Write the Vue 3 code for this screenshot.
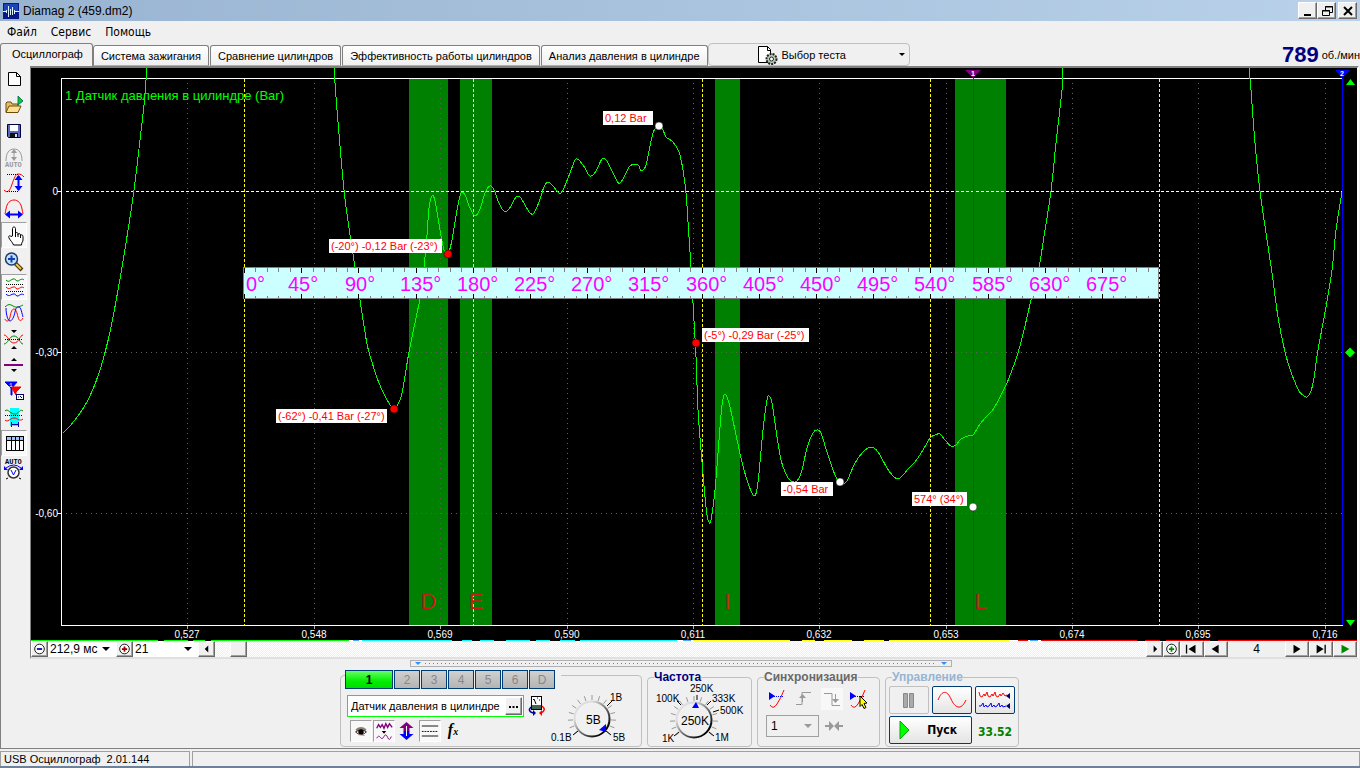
<script setup>
import { ref } from 'vue'

const tabs = [
  'Осциллограф',
  'Система зажигания',
  'Сравнение цилиндров',
  'Эффективность работы цилиндров',
  'Анализ давления в цилиндре',
]
const activeTab = ref(0)
const channels = ['1', '2', '3', '4', '5', '6', 'D']
const sensor = ref('Датчик давления в цилиндре')

const traces = [
  [[63,433],[70,426],[80,413],[90,396],[100,370],[110,332],[118,290],[126,243],[134,190],[140,140],[144,105],[146,80],[147,68]],
  [[334,68],[337,110],[344,190],[349,228],[355,267],[360,300],[367,344],[372,362],[377,378],[386,398],[394,409],[400,400],[403,388],[409,352],[416,318],[420,298],[424,267],[427,235],[429,208],[432,196],[435,201],[440,230],[444,250],[448,254],[452,240],[457,210],[460,196],[462,192],[465,195],[470,208],[475,216],[480,209],[485,193],[490,186],[494,190],[499,203],[505,212],[511,206],[516,197],[520,197],[525,205],[530,213],[534,213],[539,202],[544,187],[548,182],[553,186],[559,193],[563,190],[570,173],[576,159],[583,165],[590,176],[596,171],[602,159],[607,161],[614,175],[620,183],[630,166],[638,165],[641,171],[646,165],[653,133],[659,126],[663,130],[666,137],[673,142],[679,152],[683,170],[686,193],[688,222],[691,267],[693,303],[696,357],[698,410],[701,450],[704,486],[707,515],[709,522],[711,520],[715,490],[719,440],[722,405],[725,394],[729,403],[735,430],[741,458],[747,480],[754,496],[758,482],[763,430],[767,400],[769,396],[772,403],[776,430],[781,460],[786,474],[791,481],[797,481],[802,470],[807,448],[813,433],[817,430],[821,433],[827,452],[835,475],[840,482],[845,483],[848,479],[855,463],[863,452],[871,447],[878,452],[887,468],[893,476],[898,479],[903,475],[909,468],[915,462],[923,450],[930,438],[935,435],[940,434],[945,440],[951,446],[956,445],[961,439],[968,436],[973,435],[980,424],[987,416],[994,408],[1006,385],[1012,370],[1018,353],[1024,330],[1031,300],[1039,267],[1045,230],[1051,191],[1056,143],[1062,90],[1063,68]],
  [[1249,68],[1251,90],[1255,143],[1260,191],[1266,233],[1272,273],[1278,317],[1285,352],[1291,372],[1299,391],[1303,395],[1307,397],[1311,391],[1314,378],[1318,350],[1326,307],[1332,270],[1336,230],[1342,192]],
]

function smooth(p) {
  let d = `M${p[0][0]} ${p[0][1]}`
  for (let i = 0; i < p.length - 1; i++) {
    const a = p[i - 1] || p[i]
    const b = p[i]
    const c = p[i + 1]
    const e = p[i + 2] || c
    d += `C${b[0] + (c[0] - a[0]) / 6} ${b[1] + (c[1] - a[1]) / 6} ${c[0] - (e[0] - b[0]) / 6} ${c[1] - (e[1] - b[1]) / 6} ${c[0]} ${c[1]}`
  }
  return d
}
const tracePaths = traces.map(smooth)

const timeX = [187, 314, 440, 567, 693, 819, 946, 1072, 1198, 1325]
const timeMarks = timeX.map((x, i) => ({ label: `0,${527 + i * 21}`, x }))
const levelMarks = [
  { label: '0', y: 191 },
  { label: '-0,30', y: 352 },
  { label: '-0,60', y: 513 },
]
const phases = [
  { name: 'D', x: 409, w: 39 },
  { name: 'E', x: 460, w: 32 },
  { name: 'I', x: 715, w: 25 },
  { name: 'L', x: 955, w: 51 },
]
const strokes = [244, 473, 702, 930, 1159]
const ruler = []
for (let i = 0; i < 80; i++) ruler.push({ x: Math.round(244 + i * 11.44), major: i % 5 === 0 })
const degrees = []
for (let k = 0; k < 16; k++) {
  degrees.push({ label: `${k * 45}°`, x: Math.round(244 + k * 57.2) + (k === 0 ? 2 : k < 3 ? -13 : -16) })
}
const pins = [
  { text: '0,12 Bar', bx: 603, by: 111, bw: 50, x: 659, y: 126, c: '#fff' },
  { text: '(-20°) -0,12 Bar (-23°)', bx: 329, by: 239, bw: 113, x: 448, y: 254, c: '#f00' },
  { text: '(-5°) -0,29 Bar (-25°)', bx: 702, by: 328, bw: 107, x: 696, y: 343, c: '#f00' },
  { text: '(-62°) -0,41 Bar (-27°)', bx: 276, by: 409, bw: 111, x: 394, y: 409, c: '#f00' },
  { text: '-0,54 Bar', bx: 781, by: 482, bw: 52, x: 840, y: 482, c: '#fff' },
  { text: '574° (34°)', bx: 912, by: 492, bw: 55, x: 973, y: 507, c: '#fff' },
]
const bits = [
  [31, 318, '#0f0'], [353, 6, '#4af'], [362, 315, '#0ff'], [683, 8, '#4af'], [693, 316, '#ff0'], [1018, 10, '#f00'], [1030, 8, '#4af'], [1041, 316, '#f00'],
  [158, 6, '#000'], [188, 5, '#000'], [205, 6, '#000'], [452, 10, '#000'], [472, 8, '#000'], [494, 12, '#000'], [530, 6, '#000'], [550, 10, '#000'], [575, 5, '#000'],
  [790, 12, '#000'], [815, 9, '#000'], [852, 12, '#000'], [884, 5, '#000'], [1137, 8, '#000'], [1160, 6, '#000'], [1210, 8, '#000'],
]

function ticks(cx, cy, r1, r2, from, to, n) {
  let d = ''
  for (let i = 0; i < n; i++) {
    const a = ((from + ((to - from) * i) / (n - 1)) * Math.PI) / 180
    d += `M${cx + r1 * Math.cos(a)} ${cy + r1 * Math.sin(a)}L${cx + r2 * Math.cos(a)} ${cy + r2 * Math.sin(a)}`
  }
  return d
}
const gainTicks = ticks(42, 40, 19, 24, 140, 400, 15)
const rateTicks = ticks(46, 40, 19, 24, 140, 400, 15)
</script>

<template>
  <div class="app">
    <header class="title">
      <svg class="logo" viewBox="0 0 16 16" aria-hidden="true">
        <rect width="16" height="16" fill="#0a1a84" />
        <rect x="1" y="1" width="14" height="7" fill="#1c44b8" />
        <path d="M0 8.500h3M3.500 7v3M5.500 3v11M7.500 6v6M9.500 4v8M11.500 7v4M12 8.500h4" stroke="#dff2ff" fill="none" />
      </svg>
      <h1>Diamag 2 (459.dm2)</h1>
      <div class="win">
        <button aria-label="Свернуть"><svg viewBox="0 0 16 14"><path d="M4 11h7" stroke="#000" stroke-width="2" /></svg></button>
        <button aria-label="Восстановить"><svg viewBox="0 0 16 14"><path d="M6.500 6V2.500h7v6H11M6 3h8M3.500 6.500h7v5h-7zM3 7h8" stroke="#000" fill="none" /></svg></button>
        <button class="close" aria-label="Закрыть"><svg viewBox="0 0 16 14"><path d="M4 3l8 8M12 3l-8 8" stroke="#000" stroke-width="2" /></svg></button>
      </div>
    </header>

    <nav class="menu">
      <button>Файл</button>
      <button>Сервис</button>
      <button>Помощь</button>
    </nav>

    <div class="tabs">
      <div class="tablist" role="tablist">
        <button v-for="(t, i) in tabs" :key="t" role="tab" :aria-selected="i === activeTab" :class="{ on: i === activeTab }" @click="activeTab = i">{{ t }}</button>
      </div>
      <button class="test">
        <svg viewBox="0 0 20 20" aria-hidden="true">
          <path d="M.5 1.500h9l3 3v13H.5z" fill="#fff" stroke="#000" />
          <path d="M9.500 1.500v4h3" fill="none" stroke="#000" />
          <circle cx="13.500" cy="14" r="5" fill="#b8ccb8" stroke="#222" stroke-width="2" stroke-dasharray="2 1" />
          <circle cx="13.500" cy="14" r="2" fill="#fff" stroke="#222" />
        </svg>
        <span>Выбор теста</span>
        <i class="tri"></i>
      </button>
      <p class="rpm"><b>789</b> об./мин</p>
    </div>

    <main class="work">
      <div class="upper">
        <div class="tools">
          <button aria-label="Новый"><svg viewBox="0 0 26 26"><path d="M7.500 6.500h8l4 4v9h-12z" fill="#fff" stroke="#000" /><path d="M15.500 6.500v4h4" fill="none" stroke="#000" /></svg></button>
          <button aria-label="Открыть"><svg viewBox="0 0 26 26"><path d="M5 20V11l1-1h4l1 2h6v2" fill="#e8c060" stroke="#6b4a10" /><path d="M5 20.500l3-6.500h12l-3 6.500z" fill="#ffe090" stroke="#6b4a10" /><path d="M17 4v9l5-4z" fill="#0c3" stroke="#064" stroke-width=".8" /></svg></button>
          <button aria-label="Сохранить"><svg viewBox="0 0 26 26"><path d="M6.500 6.500h13v13h-12l-1-1z" fill="#5a66b8" stroke="#000040" /><rect x="9" y="7" width="8" height="6" fill="#fff" /><rect x="9" y="15" width="8" height="4" fill="#111" /><rect x="14" y="16" width="2" height="3" fill="#dde" /></svg></button>
          <button disabled aria-label="Автомасштаб"><svg viewBox="0 0 26 26"><path d="M5 17C5 9 8 5 13 5s8 4 8 12M13 6v9" fill="none" stroke="#999" /><path d="M10 9l3-4 3 4zM10 13l3 4 3-4z" fill="#999" /><text x="4" y="23" font-size="7" font-weight="bold" fill="#999">AUTO</text></svg></button>
          <button aria-label="Амплитуда"><svg viewBox="0 0 26 26"><path d="M3 20c3 3 5 2 7-3s4-13 7-13 4 1 6 3" fill="none" stroke="#f00" /><path d="M6 4.500h11M6 21.500h11" stroke="#000" stroke-dasharray="1 1" /><path d="M17.500 6v14" stroke="#00f" stroke-width="2" /><path d="M13.500 10l4-5 4 5zM13.500 16l4 5 4-5z" fill="#00f" /></svg></button>
          <button aria-label="Период"><svg viewBox="0 0 26 26"><path d="M4 18c0-2 1-3 1-5 1-6 4-9 8-9s7 3 8 9c0 2 1 3 1 5" fill="none" stroke="#f00" /><path d="M6 18.500h14" stroke="#00f" stroke-width="2" /><path d="M9 14.500l-5 4 5 4zM17 14.500l5 4-5 4z" fill="#00f" /></svg></button>
          <button class="on" aria-label="Рука"><svg viewBox="0 0 26 26"><path d="M11.500 14V6.500c0-2 3-2 3 0V12c0-2 2.500-2 2.500 0v.5c.5-1.500 2.500-1 2.500.5v.5c.5-1 2.500-1 2.500 1V18c0 2-1.500 2-1.500 5h-8c-1-3-3-4-4.500-7-1-2 .5-3 2-1.500z" fill="#fff" stroke="#000" /><path d="M14.500 12v3M17 12v3M19.500 13v3" stroke="#000" /></svg></button>
          <button aria-label="Лупа"><svg viewBox="0 0 26 26"><path d="M14 15l7 7" stroke="#503808" stroke-width="4" /><path d="M15 16l5 5" stroke="#e8c850" stroke-width="2" /><circle cx="10.500" cy="11" r="6" fill="#bfe0ff" stroke="#223a66" stroke-width="1.500" /><path d="M10.500 7.500v7M7 11h7" stroke="#1040b0" stroke-width="2" /></svg></button>
          <button class="on" aria-label="Каналы раздельно"><svg viewBox="0 0 26 26"><g fill="none"><path d="M5 6c3 3 4 0 7-1s3 3 5 2 4-3 6-1" stroke="#080" /><path d="M5 10.500h18M5 17.500h18" stroke="#000" stroke-dasharray="1 1" /><path d="M5 13c3 3 4 1 7 0s3 3 5 2 4-3 6-1" stroke="#f00" /><path d="M5 20c3 3 4 1 7 0s3 3 5 2 4-3 6-1" stroke="#00f" /></g></svg></button>
          <button aria-label="Каналы вместе"><svg viewBox="0 0 26 26"><g fill="none"><path d="M4 7c3-3 5-3 8-1s6 1 10-1" stroke="#080" /><path d="M4 19c1 3 4 3 5-2s2-8 4-8 3 4 4 8 3 5 5 1" stroke="#f00" /><path d="M5 8c0 7 2 13 4 13s4-4 5-9 2-5 4-5 3 7 4 10" stroke="#00f" /></g></svg></button>
          <button aria-label="Сжать"><svg viewBox="0 0 26 26"><path d="M10 4h6l-3 3zM10 23h6l-3-3z" /><path d="M3 18c4 0 5-8 10-8s6 8 9 8" fill="none" stroke="#080" /><path d="M3 9c4 0 5 8 10 8s6-8 9-8" fill="none" stroke="#f00" /><path d="M4 13.500h18" stroke="#000" stroke-dasharray="1 1" /></svg></button>
          <button aria-label="Смещение"><svg viewBox="0 0 26 26"><path d="M10 9h6l-3-3zM10 17h6l-3 3z" /><path d="M3 13h19" stroke="#800080" stroke-width="2" /></svg></button>
          <button aria-label="Маркеры"><svg viewBox="0 0 26 26"><path d="M4 4h12l-5 6v7h-1v-7z" fill="#00f" stroke="#00f" /><path d="M11 9h9l-5 5v3l-3-5z" fill="#f00" stroke="#f00" /><text x="8" y="9" font-size="6" fill="#fff">1</text><rect x="15.500" y="16.500" width="7" height="5" fill="#fff" stroke="#006" /><path d="M17 19h1M19 18l2 2" stroke="#006" /></svg></button>
          <button aria-label="Диапазон"><svg viewBox="0 0 26 26"><rect x="9" y="4" width="9" height="18" fill="#0ff" /><path d="M4 7c3-3 4 2 9 3s5-6 9-3" fill="none" stroke="#080" /><path d="M4 11.500h18" stroke="#000" stroke-dasharray="1 1" /><path d="M4 16c3 3 5-2 9-2s5 4 9 1" fill="none" stroke="#f00" /><path d="M10 20.500h7M10.500 18v5M17.500 18v5" stroke="#009" /></svg></button>
          <button class="on" aria-label="Таблица"><svg viewBox="0 0 26 26"><rect x="5.500" y="6.500" width="17" height="14" fill="#fff" stroke="#000" /><rect x="6" y="7" width="16" height="3" fill="#9cc4f4" /><path d="M6 10.500h17M10.500 7v14M14.500 7v14M18.500 7v14" stroke="#000" /></svg></button>
          <button aria-label="Авто"><svg viewBox="0 0 26 26"><text x="4" y="8" font-size="7" font-weight="bold">AUTO</text><path d="M5 12q8-6 15 0" fill="none" stroke="#00f" /><path d="M3 10v4h4zM22 10v4h-4z" fill="#00f" /><circle cx="12.500" cy="16.500" r="5.500" fill="#fff" stroke="#333" stroke-width="1.500" /><path d="M10 14l2.500 5 2.500-5" fill="none" stroke="#00f" /><path d="M7 22l-2 1M18 22l2 1" stroke="#000" /></svg></button>
        </div>

        <section class="scope">
          <svg class="chart" viewBox="31 68 1326 573" role="img" aria-label="Осциллограмма давления в цилиндре">
            <rect x="31" y="68" width="1326" height="573" fill="#000" />
            <g shape-rendering="crispEdges">
              <rect v-for="p in phases" :key="p.name" :x="p.x" y="79" :width="p.w" height="547" fill="#008000" />
              <path v-for="m in timeMarks" :key="m.label" :d="`M${m.x}.5 83V625`" stroke="#606060" stroke-dasharray="1 4" />
              <path v-for="m in timeMarks" :key="'t' + m.label" :d="`M${m.x}.5 626v3`" stroke="#aaa" />
              <path d="M66 352.500H1342M66 513.500H1342" stroke="#606060" stroke-dasharray="1 4" />
              <path d="M61.500 78.500H1343M61.500 78V625.500H1343M57 191.500h4M57 352.500h4M57 513.500h4" stroke="#fff" fill="none" />
              <path v-for="s in strokes" :key="s" :d="`M${s}.5 79V625`" stroke="#ff0" stroke-dasharray="3 2" />
              <path d="M66 191.500H1342" stroke="#fff" stroke-dasharray="3 2" />
              <path d="M973.500 78V625" stroke="#5c2a5c" />
              <path v-for="(d, i) in tracePaths" :key="i" :d="d" fill="none" stroke="#0f0" />
              <path d="M1342.500 78V625" stroke="#00f" />
            </g>
            <path d="M965 70h16l-8 8z" fill="#800080" />
            <path d="M1335 70h15l-8 8z" fill="#00f" />
            <text x="971" y="76" font-size="7" font-weight="bold" fill="#fff">1</text>
            <text x="1340" y="76" font-size="7" font-weight="bold" fill="#fff">2</text>
            <path d="M1346 85h9l-4.500-6zM1346 620h9l-4.500 6zM1345 352.500l5-5 5 5-5 5z" fill="#0f0" />
            <text x="65" y="100" class="name">1 Датчик давления в цилиндре (Bar)</text>
            <text v-for="m in levelMarks" :key="m.label" x="58" :y="m.y + 4" class="axis" text-anchor="end">{{ m.label }}</text>
            <text v-for="m in timeMarks" :key="m.label" :x="m.x" y="638" class="axis" text-anchor="middle">{{ m.label }}</text>
            <text v-for="p in phases" :key="p.name" :x="p.x + p.w / 2" y="609" class="phase" text-anchor="middle">{{ p.name }}</text>

            <g shape-rendering="crispEdges">
              <rect x="243.500" y="267.500" width="915" height="31" fill="#cff" stroke="#808080" />
              <path v-for="r in ruler" :key="r.x" :d="`M${r.x}.5 268v${r.major ? 5 : 4}M${r.x}.5 299v-${r.major ? 5 : 3}`" :stroke="r.major ? '#000' : '#808080'" />
            </g>
            <text v-for="d in degrees" :key="d.label" :x="d.x" y="291" class="deg">{{ d.label }}</text>

            <g v-for="p in pins" :key="p.text">
              <rect :x="p.bx" :y="p.by" :width="p.bw" height="14" fill="#fff" />
              <text :x="p.bx + 2" :y="p.by + 11" class="pin">{{ p.text }}</text>
              <circle :cx="p.x" :cy="p.y" r="4" :fill="p.c" stroke="#000" stroke-width=".5" />
            </g>
            <rect x="31" y="640" width="1326" height="1" fill="#fff" />
            <rect v-for="(b, i) in bits" :key="i" :x="b[0]" y="640" :width="b[1]" height="1" :fill="b[2]" />
          </svg>

          <div class="scroll">
            <button class="sq" aria-label="Уменьшить"><svg viewBox="0 0 16 16"><circle cx="8" cy="8" r="5.500" fill="#fff" stroke="#000" /><path d="M5 8h6" stroke="#00a" stroke-width="2" /></svg></button>
            <label class="combo c1"><select aria-label="Длительность"><option>212,9 мс</option></select><i class="tri"></i></label>
            <button class="sq" aria-label="Увеличить"><svg viewBox="0 0 16 16"><circle cx="8" cy="8" r="5.500" fill="#fff" stroke="#000" /><path d="M5 8h6M8 5v6" stroke="#900" stroke-width="2" /></svg></button>
            <label class="combo c2"><select aria-label="Масштаб"><option>21</option></select><i class="tri"></i></label>
            <button class="sq" aria-label="Влево"><svg viewBox="0 0 16 16"><path d="M10 4v8L6 8z" /></svg></button>
            <div class="track"><div class="thumb"></div></div>
            <button class="sq" aria-label="Вправо"><svg viewBox="0 0 16 16"><path d="M7 4v8l4-4z" /></svg></button>
            <button class="sq" aria-label="Добавить"><svg viewBox="0 0 16 16"><circle cx="8" cy="8" r="5.500" fill="#fff" stroke="#000" /><path d="M5 8h6M8 5v6" stroke="#080" stroke-width="2" /></svg></button>
            <button class="nav" aria-label="В начало"><svg viewBox="0 0 24 16"><path d="M5 3h1.500v10H5zM16 3v10L8 8z" /></svg></button>
            <button class="nav" aria-label="Назад"><svg viewBox="0 0 24 16"><path d="M15 3v10L7 8z" /></svg></button>
            <output class="page">4</output>
            <button class="nav" aria-label="Вперёд"><svg viewBox="0 0 24 16"><path d="M8 3v10l8-5z" /></svg></button>
            <button class="nav" aria-label="В конец"><svg viewBox="0 0 24 16"><path d="M7 3v10l8-5zM16 3h1.500v10H16z" /></svg></button>
            <button class="nav" aria-label="Воспроизвести"><svg viewBox="0 0 24 16"><path d="M8 3v10l9-5z" fill="#080" /></svg></button>
          </div>
        </section>
      </div>

      <div class="split"><i></i><b></b><i></i></div>

      <div class="panels">
        <section class="box chan">
          <div class="chtabs">
            <button v-for="(c, i) in channels" :key="c" :class="{ on: i === 0 }">{{ c }}</button>
          </div>
          <div class="sensor">
            <div class="field"><input v-model="sensor" aria-label="Датчик" /><button aria-label="Выбрать датчик"><svg viewBox="0 0 15 16"><path d="M3 8h2v2H3zM6.500 8h2v2h-2zM10 8h2v2h-2z" /></svg></button></div>
            <button class="plain meter" aria-label="Калибровка"><svg viewBox="0 0 18 22"><rect x="3.500" y="1.500" width="10" height="13" fill="#fff" stroke="#000" /><rect x="4" y="10" width="9" height="4" fill="#465" /><path d="M8 9L6 4M5 4.500h1M9 3h1M11 5h1" stroke="#000" /><path d="M3 12q-4 4 2 6" fill="none" stroke="#009" stroke-width="1.500" /><path d="M5 15v6l3-3z" fill="#009" /><path d="M14 11q5 4-1 7" fill="none" stroke="#f00" stroke-width="1.500" /><path d="M14 15v6l-3-3z" fill="#f00" /></svg></button>
          </div>
          <div class="opts">
            <button class="plain on" aria-label="Показать"><svg viewBox="0 0 22 22"><path d="M5 9q6-5 12 0l-1 2H6z" fill="#8a8070" /><path d="M5 12q6-4 12 0-6 6-12 0z" fill="#fff" stroke="#222" /><circle cx="11" cy="12" r="3" /><path d="M8 15l7 1" stroke="#c88" /></svg></button>
            <button class="plain on" aria-label="Фильтр"><svg viewBox="0 0 22 22"><path d="M3 8l2-4 2 3 2-3 2 4 2-5 2 4 2-4 3 4" fill="none" stroke="#800080" stroke-width="1.500" /><path d="M8.500 11h5L11 14z" /><path d="M3 19q2-4 4-1t4-1 4 1 4-1" fill="none" stroke="#800080" /></svg></button>
            <button class="plain" aria-label="Инверсия"><svg viewBox="0 0 22 22"><path d="M10.500 2l7 6h-4v3h-6V8h-4z" fill="#800080" /><path d="M10.500 20l7-6h-4v-3h-6v3h-4z" fill="#00f" /><path d="M10.500 6v10" stroke="#fff" /></svg></button>
            <button class="plain on" aria-label="Линии"><svg viewBox="0 0 22 22"><path d="M2 5.500h18M2 16.500h18" stroke="#000" /><path d="M2 11.500h18" stroke="#000" stroke-dasharray="2 1" /></svg></button>
            <button class="plain fx">f<small>x</small></button>
          </div>
          <svg class="knob gain" viewBox="0 0 90 70" role="img" aria-label="Диапазон 5B">
            <defs><linearGradient id="rim" x1="0" y1="0" x2="1" y2="1"><stop offset=".25" stop-color="#ddd" /><stop offset=".85" stop-color="#000" /></linearGradient></defs>
            <path :d="gainTicks" stroke="#999" />
            <circle cx="42" cy="40" r="17.500" fill="#f0f0f0" stroke="url(#rim)" stroke-width="2" />
            <path d="M57 27l5-5M56 52l5 4M28 52l-5 4" stroke="#000" />
            <path d="M56 45v8l-7-2z" fill="#00f" />
            <text x="36" y="45" font-size="12">5B</text>
            <text x="60" y="22">1B</text><text x="63" y="62">5B</text><text x="1" y="62">0.1B</text>
          </svg>
        </section>

        <fieldset class="box rate">
          <legend>Частота</legend>
          <svg class="knob" viewBox="0 0 98 70" role="img" aria-label="Частота 250K">
            <path :d="rateTicks" stroke="#999" />
            <circle cx="46" cy="40" r="17.500" fill="#f0f0f0" stroke="url(#rim)" stroke-width="2" />
            <path d="M49 20v-5M59 25l4-4M65 32l6-2M33 25l-4-4M31 52l-5 4M61 52l5 4" stroke="#000" />
            <path d="M44 28h7l-3-6z" fill="#00f" />
            <text x="33" y="45" font-size="12">250K</text>
            <text x="42" y="12">250K</text><text x="8" y="22">100K</text><text x="64" y="22">333K</text>
            <text x="72" y="34">500K</text><text x="14" y="62">1K</text><text x="67" y="61">1M</text>
          </svg>
        </fieldset>

        <fieldset class="box sync">
          <legend>Синхронизация</legend>
          <div class="row">
            <button class="plain" aria-label="Уровень"><svg viewBox="0 0 22 22"><path d="M3 17q3 5 7-1t7-14" fill="none" stroke="#f00" /><path d="M5 8.500h12" stroke="#00f" stroke-dasharray="1 1" /><path d="M2 4v8l6-4z" fill="#00f" /></svg></button>
            <button class="plain" disabled aria-label="Фронт"><svg viewBox="0 0 22 22"><path d="M2 16.500h6v-12h9M8.500 14V8" fill="none" stroke="#999" /><path d="M5 10l3.500-4 3.500 4z" fill="#999" /></svg></button>
            <button class="plain hatch" disabled aria-label="Спад"><svg viewBox="0 0 22 22"><path d="M3 5.500h8v12h8M14.500 6v6" fill="none" stroke="#999" /><path d="M11 11l3.500 4 3.500-4z" fill="#999" /></svg></button>
            <button class="plain" aria-label="Выбор уровня"><svg viewBox="0 0 22 22"><path d="M3 17q3 5 7-1t7-14" fill="none" stroke="#f00" /><path d="M5 8.500h12" stroke="#00f" stroke-dasharray="1 1" /><path d="M2 4v8l6-4z" fill="#00f" /><path d="M12 8l7 7-3 .5 2 4-2 1-2-4-2 2z" fill="#ff0" stroke="#000" /></svg></button>
          </div>
          <div class="row two">
            <label class="combo c3"><select disabled aria-label="Канал синхронизации"><option>1</option></select><i class="tri"></i></label>
            <svg class="meet" viewBox="0 0 20 12" aria-hidden="true"><path d="M1 6h8M19 6h-8" stroke="#999" stroke-width="2" /><path d="M5 1v10l5-5zM15 1v10l-5-5z" fill="#999" /></svg>
          </div>
        </fieldset>

        <fieldset class="box ctrl">
          <legend>Управление</legend>
          <div class="grid">
            <button class="big off" disabled aria-label="Пауза"><svg viewBox="0 0 38 26"><path d="M13.500 6.500h4v14h-4zM19.500 6.500h4v14h-4z" fill="#aaa" stroke="#888" /></svg></button>
            <button class="big" aria-label="Синус"><svg viewBox="0 0 38 26"><path d="M5 13C9 3 14 3 18 12s10 12 15 1" fill="none" stroke="#f00" /></svg></button>
            <button class="big" aria-label="Непрерывно"><svg viewBox="0 0 38 26"><path d="M3 5l1 4 2 1 2-3 1 2 2-4 1 4 2 1 2-3 1 2 2-4 1 4 2 1 2-3 1 2 2-3 2 3 2-1" fill="none" stroke="#f00" /><path d="M3 19h2l2-3 1 4 2-2 1 2 2-1 2-3 1 4 2-2 1 2 2-1 2-3 1 4 2-2 1 2 3-1" fill="none" stroke="#00f" /><path d="M34 6v6l-4-3zM34 16v6l-4-3z" fill="#006" /></svg></button>
            <button class="big start"><svg viewBox="0 0 12 20" aria-hidden="true"><path d="M1 1v18l9-9z" fill="#0f0" stroke="#0a0" /></svg><span>Пуск</span></button>
            <output>33.52</output>
          </div>
        </fieldset>
      </div>
    </main>

    <footer class="status">
      <p><span>USB Осциллограф</span><span>2.01.144</span></p>
      <p></p>
    </footer>
  </div>
</template>

<style>
body { margin: 0; background: #f0f0f0; }
</style>

<style scoped>
.app { font: 11px/14px "Liberation Sans", Arial, sans-serif; color: #000; min-height: 100vh; display: flex; flex-direction: column; background: #f0f0f0; }
* { box-sizing: border-box; }
button, select, input { font: inherit; color: inherit; margin: 0; padding: 0; border: 0; background: none; border-radius: 0; }
svg { display: block; }
p, h1 { margin: 0; font-weight: normal; }
.title { height: 21px; display: flex; align-items: center; gap: 4px; padding: 0 3px; background: linear-gradient(90deg, #99b4d1, #b9d1ea); }
.title h1 { font-size: 12px; flex: 1; }
.logo { width: 16px; height: 16px; }
.win { display: flex; }
.win button, .sq, .nav, .thumb, .field button { background: #f0f0f0; border: 1px solid; border-color: #fff #696969 #696969 #fff; box-shadow: inset -1px -1px #a0a0a0; }
.win button { width: 19px; height: 17px; display: grid; place-items: center; }
.win svg { width: 16px; height: 14px; }
.win .close { margin-left: 2px; }
.menu { height: 22px; display: flex; align-items: center; gap: 14px; padding: 0 7px; font: 12px/14px "DejaVu Sans Condensed", sans-serif; }
.tabs { height: 23px; display: flex; align-items: flex-end; }
.tablist { display: flex; align-items: flex-end; gap: 1px; }
.tablist button { height: 21px; padding: 0 7px; border: 1px solid #808080; border-bottom-color: #b0b0b0; border-radius: 3px 3px 0 0; background: linear-gradient(#fff, #efefef); white-space: nowrap; }
.tablist .on { height: 23px; padding: 0 9px 2px 11px; background: #f0f0f0; border-bottom: 0; margin-right: -1px; }
.test { align-self: flex-start; width: 202px; height: 23px; display: flex; align-items: center; gap: 4px; padding: 0 4px 0 49px; border: 1px solid #c0c0c0; border-radius: 4px; }
.test svg { width: 20px; height: 20px; }
.test .tri { margin-left: auto; }
.tri { width: 0; height: 0; border: 4px solid transparent; border-top-color: #000; border-bottom: 0; }
.test .tri { border-width: 3px 3px 0; }
.rpm { margin-left: auto; align-self: stretch; display: flex; align-items: center; gap: 3px; white-space: nowrap; }
.rpm b { font-size: 22px; line-height: 20px; color: #000080; }
.work { border-left: 1px solid #808080; border-bottom: 1px solid #808080; flex: 1; padding-bottom: 1px; }
.upper { display: flex; align-items: stretch; }
.tools { width: 29px; flex: none; }
.tools button { display: block; width: 26px; height: 26px; }
.tools svg { width: 26px; height: 26px; }
.tools .on { border: 1px solid; border-color: #a0a0a0 #fff #fff #a0a0a0; background: #f8f8f8; }
.tools .on svg { margin: -1px; }
.tools text { font-family: "Liberation Mono", monospace; }
.scope { flex: 1; min-width: 0; border: 1px solid #a0a0a0; border-width: 2px 0 0 1px; border-color: #808080; margin-right: 1px; border-right: 2px solid #fff; border-bottom: 2px solid #e0e0e0; }
.chart { width: 100%; height: auto; }
.chart .name { font-size: 13px; fill: #0f0; }
.chart .axis { font-size: 10px; fill: #fff; }
.chart .phase { font-size: 22px; fill: #c81818; }
.chart .deg { font-size: 20px; fill: #f0f; }
.chart .pin { font-size: 11px; fill: #f00; }
.scroll { display: flex; height: 16px; }
.sq { width: 17px; height: 16px; flex: none; }
.sq svg { width: 15px; height: 14px; }
.nav { width: 24px; height: 16px; flex: none; }
.nav svg { width: 22px; height: 14px; }
.combo { display: flex; align-items: center; background: #fff; padding: 0 6px 0 2px; font-size: 12px; }
.combo select { appearance: none; flex: 1; min-width: 0; opacity: 1; }
.c1 { width: 68px; }
.c2 { width: 65px; }
.track { flex: 1; background: repeating-conic-gradient(#f0f0f0 0 25%, #fff 0 50%) 0 0 / 2px 2px; padding-left: 15px; }
.thumb { width: 17px; height: 16px; }
.page { width: 57px; text-align: center; font-size: 12px; line-height: 16px; }
.split { width: 542px; height: 7px; margin: 1px auto 0; border: 1px solid #b0b0b0; display: flex; align-items: center; padding: 0 4px; gap: 4px; }
.split i { border: 3px solid transparent; border-top-color: #2a90ff; border-bottom: 0; }
.split b { flex: 1; height: 1px; background: repeating-linear-gradient(90deg, #2a90ff 0 1px, transparent 1px 4px); }
.panels { display: flex; justify-content: center; gap: 5px; margin-top: 3px; padding-right: 2px; height: 77px; }
.box { margin: 0; min-width: 0; border: 1px solid #c0c0c0; border-radius: 4px; padding: 0; }
legend { font-weight: bold; font-size: 12px; line-height: 14px; padding: 0; margin-left: 6px; }
.rate { width: 105px; }
.rate legend { color: #000080; }
.sync { width: 123px; }
.sync legend { color: #696969; }
.ctrl { width: 134px; }
.ctrl legend { color: #99b4d1; }
.chan { width: 302px; margin-top: 5px; display: grid; grid-template-columns: 205px 1fr; grid-template-rows: 16px 25px 1fr; position: relative; }
.chtabs { position: absolute; left: 4px; top: -6px; display: flex; gap: 1px; background: #f0f0f0; padding-right: 6px; }
.chtabs button { width: 26px; height: 19px; border: 1px solid #003c74; background: linear-gradient(#d0d0d0, #b4b4b4); color: #888; font-size: 12px; }
.chtabs .on { width: 48px; background: linear-gradient(#6f6, #0e0 60%, #0d0); color: #000; font-weight: bold; }
.sensor { grid-row: 2; display: flex; gap: 4px; padding: 3px 0 0 6px; }
.field { width: 177px; height: 22px; border: 1px solid #0f0; background: #fff; display: flex; padding: 1px; }
.field input { flex: 1; min-width: 0; padding-left: 2px; }
.field button { width: 17px; }
.field svg { width: 15px; height: 16px; }
.plain { width: 22px; height: 22px; flex: none; }
.plain svg { width: 100%; height: 100%; }
.meter { width: 18px; }
.opts { grid-row: 3; display: flex; gap: 1px; padding: 3px 0 0 9px; }
.opts .on { border: 1px solid; border-color: #a0a0a0 #fff #fff #a0a0a0; background: #f8f8f8; }
.fx { font: italic bold 16px/20px "Liberation Serif", serif; }
.fx small { font-size: 10px; }
.knob { font-size: 10px; width: 98px; height: 70px; margin-top: -4px; }
.gain { width: 90px; height: 70px; grid-column: 2; grid-row: 1 / 4; margin: 3px 0 0 4px; }
.row { display: flex; gap: 5px; padding: 4px 0 0 9px; }
.two { padding: 5px 0 0 8px; align-items: center; }
.c3 { width: 53px; height: 22px; border: 1px solid #a0a0a0; background: #f0f0f0; padding-left: 4px; }
.c3 .tri { border-top-color: #999; }
.meet { width: 20px; height: 12px; }
.hatch { background: #f8f8f8; }
.grid { display: grid; grid-template-columns: 40px 40px 40px; gap: 2px 3px; padding: 2px 0 0 3px; }
.big { height: 28px; border: 1px solid #003c74; border-radius: 2px; background: linear-gradient(#fff, #e4e4e4); }
.big svg { width: 38px; height: 26px; }
.off { border-color: #c0c0c0; background: #f0f0f0; }
.start { grid-column: 1 / 3; display: flex; align-items: center; padding: 0 14px 0 9px; justify-content: space-between; }
.start, .grid output { font: bold 12px/14px "DejaVu Sans Condensed", sans-serif; }
.start svg { width: 12px; height: 20px; }
.grid output { color: #008000; align-self: center; justify-self: center; padding-top: 3px; }
.status { height: 19px; display: flex; gap: 2px; padding-top: 2px; border-bottom: 2px solid #6d8199; }
.status p { flex: 1; height: 15px; border: 1px solid #a0a0a0; border-bottom: 0; padding-left: 3px; display: flex; gap: 6px; }
.status p:first-child { flex: 0 0 190px; }
</style>
